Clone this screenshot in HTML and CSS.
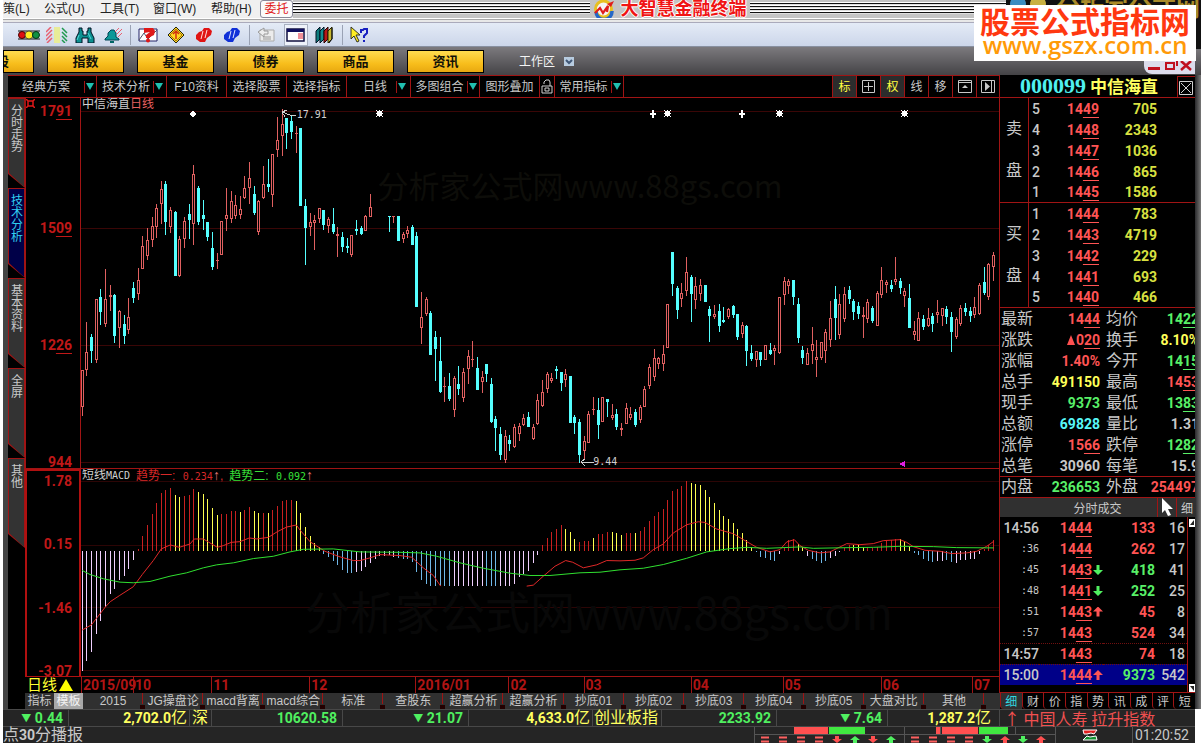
FILE: index.html
```html
<!DOCTYPE html>
<html lang="zh-CN">
<head>
<meta charset="utf-8">
<title>大智慧金融终端</title>
<link rel="stylesheet" href="styles.css">
</head>
<body>
<div class="app">
  <header class="titlebar">
    <nav class="menu">
      <button class="menu-item menu-cut">策(L)</button><button class="menu-item">公式(U)</button><button class="menu-item menu-slim">工具(T)</button><button class="menu-item menu-wide">窗口(W)</button><button class="menu-item">帮助(H)</button>
      <button class="trade-btn">委托</button>
    </nav>
    <div class="stripes"></div>
    <div class="brand">
      <svg width="22" height="18" viewBox="0 0 22 18"><circle cx="10.500" cy="9" r="8" fill="#f4f4f4" stroke="#e8c020" stroke-width="3"/><path d="M3 12a8 8 0 0 0 16-1" fill="none" stroke="#2468c8" stroke-width="3.500"/><path d="M2 13l5-5 3 5 5-7-1 6" fill="none" stroke="#e01c1c" stroke-width="2.200"/><path d="M21 1l-7 3 4 3z" fill="#e01c1c"/></svg>
      <h1>大智慧金融终端</h1>
    </div>
    <div class="stripes"></div>
  </header>

  <div class="toolbar">
    <button class="tool" aria-label="行情"><svg width="22" height="16" viewBox="0 0 22 16"><path d="M0 4h22M0 12h22" stroke="#111"/><circle cx="4" cy="8" r="3.500" fill="#e01010" stroke="#400"/><circle cx="11" cy="8" r="4" fill="#ffee20" stroke="#553"/><circle cx="18" cy="8" r="3.500" fill="#109040" stroke="#031"/></svg></button>
    <button class="tool" aria-label="选股"><svg width="22" height="16" viewBox="0 0 22 16"><path d="M8 0h6v16H8z" fill="#e8ec98"/><path d="M0 5l5-5M0 9l6-6M0 13l6-6M1 16l5-5" stroke="#e86070" stroke-width="1.500"/><path d="M16 1l5 5M16 5l5 5M16 9l5 5M16 13l3 3" stroke="#209a50" stroke-width="1.500"/></svg></button>
    <button class="tool" aria-label="查找"><svg width="20" height="16" viewBox="0 0 20 16"><path d="M4 1h3v3h1v4h4V4h1V1h3v4l3 6v5h-6v-5H7v5H1v-5l3-6z" fill="#0c9090" stroke="#012"/><path d="M4 8l-2 5M13 6l3 6" stroke="#50d8d8"/></svg></button>
    <button class="tool" aria-label="预警"><svg width="20" height="16" viewBox="0 0 20 16"><path d="M2 12l3-3V6l3-3h3l2 3v4l3 2v1H2z" fill="#0c9898" stroke="#045"/><path d="M7 14h4v2H7z" fill="#066"/><path d="M12 5l4-4M14 7l5-5M15 10l4-4" stroke="#e86070"/></svg></button>
    <i class="tool-sep"></i>
    <button class="tool" aria-label="问答"><svg width="20" height="16" viewBox="0 0 20 16"><path d="M1 2h18v12H1z" fill="#fff" stroke="#226"/><path d="M1 13l5-7 4 6 9-9" fill="none" stroke="#556"/><path d="M6 1h9l2 3-1 4-4 2v1H8V8l4-3-6 1z" fill="#e01818"/><circle cx="10" cy="13.500" r="2" fill="#e01818"/></svg></button>
    <button class="tool" aria-label="提示"><svg width="18" height="18" viewBox="0 0 18 18"><path d="M9 1l8 8-8 8-8-8z" fill="#ffd820" stroke="#221"/><path d="M9 3l6 6-6 6-6-6z" fill="none" stroke="#a87810"/><path d="M9 5v8M6 8l3-3 3 3" fill="none" stroke="#d03010" stroke-width="1.500"/></svg></button>
    <button class="tool" aria-label="红色标记"><svg width="18" height="16" viewBox="0 0 18 16"><path d="M1 8l3-3 3-1 2-3h5l3 3-1 4-4 3-2 4H5l-4-3z" fill="#e01414"/><path d="M8 4L6 12M12 3l-2 8" stroke="#ffdede"/></svg></button>
    <button class="tool" aria-label="蓝色标记"><svg width="18" height="16" viewBox="0 0 18 16"><path d="M1 8l3-3 3-1 2-3h5l3 3-1 4-4 3-2 4H5l-4-3z" fill="#1030d8"/><path d="M8 4L6 12M12 3l-2 8" stroke="#dee4ff"/></svg></button>
    <i class="tool-sep"></i>
    <button class="tool" aria-label="返回"><svg width="20" height="16" viewBox="0 0 20 16"><path d="M3 3h14v11H3z" fill="#ececec" stroke="#aaa"/><path d="M1 5l6-4v3h4v3H7v3zM6 10h8M6 12h8" fill="#eee" stroke="#999"/></svg></button>
    <button class="tool tool-on" aria-label="窗口布局"><svg width="20" height="16" viewBox="0 0 20 16"><path d="M1 2h17v12H1z" fill="#fff" stroke="#101040" stroke-width="1.500"/><path d="M1 2h17v3H1z" fill="#101060"/><path d="M12 7h5M12 9h5M12 11h5" stroke="#e02030"/></svg></button>
    <button class="tool" aria-label="资料库"><svg width="20" height="18" viewBox="0 0 20 18"><path d="M1 5l4-4v12l-4 4z" fill="#0c7c7c" stroke="#012"/><path d="M5 5l4-4v12l-4 4z" fill="#109090" stroke="#012"/><path d="M9 5l4-4v12l-4 4z" fill="#b81818" stroke="#200"/><path d="M13 5l4-4v12l-4 4z" fill="#c8b830" stroke="#220"/><path d="M17 2v11l-3 4" fill="none" stroke="#111"/></svg></button>
    <i class="tool-sep"></i>
    <button class="tool" aria-label="帮助指针"><svg width="20" height="18" viewBox="0 0 20 18"><path d="M1 1l9 8H6l3 6-2 1-3-6-3 3z" fill="#ffee20" stroke="#332"/><path d="M11 7V4h2l1-1h3v4l-3 3v2" fill="none" stroke="#1820c0" stroke-width="2"/><path d="M13 14h2v2h-2z" fill="#1820c0"/></svg></button>
  </div>

  <nav class="markets">
    <button class="gold">股</button><button class="gold">指数</button><button class="gold">基金</button><button class="gold">债券</button><button class="gold">商品</button><button class="gold">资讯</button>
    <button class="workspace">工作区 <svg width="10" height="9" viewBox="0 0 10 9"><path d="M0 0h10v9H0z" fill="#b8cce0"/><path d="M2 3l3 3 3-3" fill="none" stroke="#405878" stroke-width="2"/></svg></button>
    <div class="window-ctl">
      <svg width="44" height="12" viewBox="0 0 44 12"><path d="M0 7h12v3H0z" fill="#c01020"/><path d="M18 3h8v6h-8zM22 0h7v6" fill="none" stroke="#c01020" stroke-width="2"/><path d="M33 10l10-9M33 1l10 9" stroke="#c01020" stroke-width="2.500"/></svg>
    </div>
  </nav>

  <div class="body">
    <div class="left">
      <div class="cmdbar">
        <button class="cmd c-80">经典方案<i class="dd"></i></button><button class="cmd c-70">技术分析<i class="dd"></i></button><button class="cmd c-60">F10资料</button><button class="cmd c-60">选择股票</button><button class="cmd c-60">选择指标</button><button class="cmd c-64">日线<i class="dd"></i></button><button class="cmd c-69">多图组合<i class="dd"></i></button><button class="cmd c-60">图形叠加</button><button class="cmd c-15" aria-label="锁定"><svg width="12" height="15" viewBox="0 0 12 15"><path d="M3 5V3l2-2h3l1 2v4M1 7h10v7H1zM4 9h4v3H4z" fill="none" stroke="#d0d0d0"/></svg></button><button class="cmd c-69">常用指标<i class="dd"></i></button>
        <span class="fill"></span>
        <button class="cmd sq on">标</button><button class="cmd sq" aria-label="十字"><svg width="13" height="13" viewBox="0 0 13 13"><path d="M.5.5h12v12H.5zM2 6.500h9M6.500 2v9" fill="none" stroke="#c8c8c8"/></svg></button><button class="cmd sq on">权</button><button class="cmd sq">线</button><button class="cmd sq">移</button><button class="cmd sq" aria-label="上栏"><svg width="14" height="13" viewBox="0 0 14 13"><path d="M.5.5h13v12H.5zM.5 2.500h13" fill="none" stroke="#c8c8c8"/><path d="M4 8l3-3 3 3z" fill="#c8c8c8"/></svg></button><button class="cmd sq last" aria-label="右栏"><svg width="14" height="13" viewBox="0 0 14 13"><path d="M.5.5h13v12H.5zM10.500 1v11" fill="none" stroke="#c8c8c8"/><path d="M4 2l5 4.500L4 11z" fill="#c8c8c8"/></svg></button>
      </div>
      <div class="work">
        <nav class="side">
          <button class="side-tab">分时走势</button><button class="side-tab side-on">技术分析</button><button class="side-tab">基本资料</button><button class="side-tab">全屏</button><button class="side-tab">其他</button>
        </nav>
        <div class="charts">
          <div class="axis axis-k">
            <svg class="gear" width="9" height="9" viewBox="0 0 9 9"><path d="M2 2h5v5H2zM0 0l2 2M9 0L7 2M0 9l2-2M9 9L7 7" fill="none" stroke="#e01818" stroke-width="1.500"/></svg>
            <span>17<u>91</u></span><span>15<u>09</u></span><span>12<u>26</u></span><span>9<u>44</u></span>
          </div>
          <div class="plot plot-k">
            <svg id="kline" viewBox="0 0 918 370" preserveAspectRatio="none"></svg>
            <p class="caption">中信海直<em>日线</em></p>
            <span class="mark mark-high">17.91</span><span class="mark mark-low">9.44</span>
            <span class="water water-a">分析家公式网www.88gs.com</span>
          </div>
          <div class="axis axis-m"><span>1.78</span><span>0.15</span><span>-1.46</span><span>-3.07</span></div>
          <div class="plot plot-m">
            <svg id="macd" viewBox="0 0 918 208" preserveAspectRatio="none"></svg>
            <p class="caption caption-m"><span>短线<tt>MACD</tt></span><em class="r">趋势一: <tt>0.234</tt><b>↑</b>,</em><em class="g">趋势二: <tt>0.092</tt><b>↑</b></em></p>
            <span class="water water-b">分析家公式网www.88gs.com</span>
          </div>
          <button class="period">日线<svg width="14" height="12" viewBox="0 0 14 12"><path d="M7 0l7 12H0z" fill="#ff0"/></svg></button>
          <div class="dates"><span>2015/09</span><span>10</span><span>11</span><span>12</span><span>2016/01</span><span>02</span><span>03</span><span>04</span><span>05</span><span>06</span><span>07</span></div>
        </div>
        <div class="templates">
          <button class="tp-mode">指标</button><button class="tp-mode tp-on">模板</button>
          <div class="tp-list"><button class="tp">2015</button><button class="tp">JG操盘论</button><button class="tp">macd背离</button><button class="tp">macd综合</button><button class="tp">标准</button><button class="tp">查股东</button><button class="tp">超赢分析</button><button class="tp">超赢分析</button><button class="tp">抄底01</button><button class="tp">抄底02</button><button class="tp">抄底03</button><button class="tp">抄底04</button><button class="tp">抄底05</button><button class="tp">大盘对比</button><button class="tp">其他</button></div>
        </div>
      </div>
    </div>

    <aside class="quote">
      <div class="q-head"><strong>000099</strong><b>中信海直</b><button class="q-close" aria-label="关闭"><svg width="14" height="14" viewBox="0 0 14 14"><path d="M.5.5h13v13H.5zM2 2l10 10M12 2L2 12" fill="none" stroke="#d0d0d0"/></svg></button></div>
      <table class="book">
        <tr><th rowspan="5">卖<br>盘</th><td>5</td><td>14<u>49</u></td><td>705</td></tr>
        <tr><td>4</td><td>14<u>48</u></td><td>2343</td></tr>
        <tr><td>3</td><td>14<u>47</u></td><td>1036</td></tr>
        <tr><td>2</td><td>14<u>46</u></td><td>865</td></tr>
        <tr><td>1</td><td>14<u>45</u></td><td>1586</td></tr>
      </table>
      <table class="book">
        <tr><th rowspan="5">买<br>盘</th><td>1</td><td>14<u>44</u></td><td>783</td></tr>
        <tr><td>2</td><td>14<u>43</u></td><td>4719</td></tr>
        <tr><td>3</td><td>14<u>42</u></td><td>229</td></tr>
        <tr><td>4</td><td>14<u>41</u></td><td>693</td></tr>
        <tr><td>5</td><td>14<u>40</u></td><td>466</td></tr>
      </table>
      <table class="stats">
        <tr><th>最新</th><td class="up">14<u>44</u></td><th>均价</th><td class="down">14<u>22</u></td></tr>
        <tr><th>涨跌</th><td class="up"><svg width="8" height="10" viewBox="0 0 8 10"><path d="M4 0l4 10H0z" fill="#ff5050"/></svg>0<u>20</u></td><th>换手</th><td class="yel">8.10%</td></tr>
        <tr><th>涨幅</th><td class="up">1.40%</td><th>今开</th><td class="down">14<u>15</u></td></tr>
        <tr><th>总手</th><td class="yel">491150</td><th>最高</th><td class="up">14<u>53</u></td></tr>
        <tr><th>现手</th><td class="down">9373</td><th>最低</th><td class="down">13<u>83</u></td></tr>
        <tr><th>总额</th><td class="cyan">69828</td><th>量比</th><td>1.31</td></tr>
        <tr><th>涨停</th><td class="up">15<u>66</u></td><th>跌停</th><td class="down">12<u>82</u></td></tr>
        <tr><th>总笔</th><td>30960</td><th>每笔</th><td>15.9</td></tr>
        <tr class="split"><th>内盘</th><td class="down">236653</td><th>外盘</th><td class="up">254497</td></tr>
      </table>
      <div class="t-head"><span>分时成交</span><i><svg width="14" height="18" viewBox="0 0 14 18"><path d="M2 0l11 11H8l3 6-3 1-3-6-3 3z" fill="#fff"/></svg></i><button>细</button></div>
      <div class="t-body">
        <table class="trades">
          <tr><th>14:56</th><td class="up">14<u>44</u></td><td class="ar"></td><td class="up">133</td><td>16</td></tr>
          <tr><th class="sec">:36</th><td class="up">14<u>44</u></td><td class="ar"></td><td class="up">262</td><td>17</td></tr>
          <tr><th class="sec">:45</th><td class="up">14<u>43</u></td><td class="ar"><i class="arw dn"></i></td><td class="down">418</td><td>41</td></tr>
          <tr><th class="sec">:48</th><td class="up">14<u>41</u></td><td class="ar"><i class="arw dn"></i></td><td class="down">252</td><td>25</td></tr>
          <tr><th class="sec">:51</th><td class="up">14<u>43</u></td><td class="ar"><i class="arw"></i></td><td class="up">45</td><td>8</td></tr>
          <tr><th class="sec">:57</th><td class="up">14<u>43</u></td><td class="ar"></td><td class="up">524</td><td>34</td></tr>
          <tr class="minute"><th>14:57</th><td class="up">14<u>43</u></td><td class="ar"></td><td class="up">74</td><td>18</td></tr>
          <tr class="minute cur"><th>15:00</th><td class="up">14<u>44</u></td><td class="ar"><i class="arw"></i></td><td class="down">9373</td><td>542</td></tr>
        </table>
        <div class="scroll"><svg width="6" height="8" viewBox="0 0 6 8"><path d="M0 0h6v8H0z" fill="#fff"/><path d="M1 6l4-5v5z" fill="#222"/></svg><svg width="6" height="8" viewBox="0 0 6 8"><path d="M0 0h6v8H0z" fill="#fff"/><path d="M1 2l4 5V2z" fill="#222"/></svg></div>
      </div>
      <nav class="q-tabs"><button class="q-on">细</button><button>财</button><button>价</button><button>指</button><button>势</button><button>讯</button><button>成</button><button>评</button><button>短</button></nav>
    </aside>
  </div>

  <footer class="foot">
    <div class="indices">
      <span class="lo"><small>▼</small> 0.44</span><span class="vol">2,702.0<i>亿</i></span><span class="vol name"><i>深</i></span><span class="lo">10620.58</span><span class="lo"><small>▼</small> 21.07</span><span class="vol">4,633.0<i>亿</i></span><span class="vol name"><i>创业板指</i></span><span class="lo">2233.92</span><span class="lo"><small>▼</small> 7.64</span><span class="vol">1,287.2<i>亿</i></span><span class="ticker">↑ 中国人寿 拉升指数</span>
    </div>
    <div class="news">
      <p class="headline">点<b>30</b>分播报</p>
      <svg class="flow" width="302" height="16" viewBox="0 0 302 16">
        <path d="M.5 0v16M0 7.500h302M40.500 0v7M150.500 0v16M186.500 0v7M261.500 0v7M301.500 0v16" fill="none" stroke="#555"/>
        <path d="M40 0h34v7H40zM182 0h4v7h-4zM188 0h36v7h-36z" fill="#ff5050"/>
        <path d="M75 0h36v7H75zM225 0h29v7h-29z" fill="#40e840"/>
        <path d="M7 10.500h8M7 14.500h8M25 10.500h8M25 14.500h8M43 10.500h8M43 14.500h8M61 10.500h8M61 14.500h8M157 10.500h8M157 14.500h8M175 10.500h8M175 14.500h8M193 10.500h8M193 14.500h8M211 10.500h8M211 14.500h8" stroke="#ff6060" stroke-width="2"/>
        <path d="M81 9h4v3h3l-5 4-5-4h3zM117 9h4v3h3l-5 4-5-4h3z" fill="#ff5050"/>
        <path d="M99 16h4v-3h3l-5-4-5 4h3zM135 16h4v-3h3l-5-4-5 4h3z" fill="#50f060"/>
        <path d="M231 9h4v3h3l-5 4-5-4h3zM267 9h4v3h3l-5 4-5-4h3z" fill="#50f060"/>
        <path d="M249 16h4v-3h3l-5-4-5 4h3zM285 16h4v-3h3l-5-4-5 4h3z" fill="#ff5050"/>
      </svg>
      <svg class="net" width="16" height="12" viewBox="0 0 16 12"><path d="M1 1h14l-3 4-3-1-4 1H2z" fill="#e02020" stroke="#fff"/><path d="M15 11H1l4-4 3 1 6-1z" fill="#109030" stroke="#fff"/></svg>
      <time class="clock">01:20:52</time>
    </div>
  </footer>

  <div class="ad-back"><svg width="50" height="10" viewBox="0 0 50 10"><circle cx="12" cy="4" r="8" fill="#3a8cc0"/><circle cx="32" cy="4" r="8" fill="#c8b040"/></svg><span>分析家公式网</span></div>
  <a class="ad" href="#ad"><b>股票公式指标网</b><span>www.gszx.com.cn</span></a>
</div>
<script src="script.js"></script>
</body>
</html>
```

FILE: styles.css
```css
* { box-sizing: border-box; margin: 0; padding: 0; }
html, body { height: 100%; }
body { background: #fff; overflow: hidden; font: 12px/16px "Liberation Sans", "Noto Sans CJK SC", sans-serif; color: #c8c8c8; }
button { background: none; border: 0; color: inherit; font: inherit; white-space: nowrap; }
svg { display: block; }
i, em { font-style: normal; }
u { text-decoration: underline; text-decoration-thickness: 1px; text-underline-offset: 3px; }
table { border-collapse: collapse; width: 100%; }
th { font-weight: 400; }
tt { font-family: "DejaVu Sans Mono", monospace; font-size: 10px; }

.app { position: relative; height: 100vh; display: flex; flex-direction: column; padding-left: 3px; overflow: hidden; }

/* title row */
.titlebar { display: flex; height: 23px; flex: none; background: linear-gradient(#c4c4c4 0 18px, #fff 18px 19px, #a8a8a8 19px 20px, #e8e8e8 20px 22px, #aab 22px); }
.menu { display: flex; height: 18px; background: #f0f0f0; color: #222; }
.menu-item { width: 56px; text-align: left; }
.menu-cut { width: 41px; }
.menu-slim { width: 53px; }
.menu-wide { width: 58px; }
.trade-btn { width: 33px; margin-left: -7px; height: 18px; background: #fbfbfb; border: 1px solid #8a8a9a; border-radius: 3px; color: #e01818; }
.stripes { flex: 297; height: 12px; margin-top: 2px; background: repeating-linear-gradient(#fff 0 1px, #111 1px 2px, #ddd 2px 3px); }
.stripes:last-child { flex: 452; }
.brand { display: flex; gap: 6px; align-items: center; height: 18px; padding: 0 3px; color: #f01414; }
.brand h1 { font-size: 18px; line-height: 18px; text-shadow: 1px 0 #fff, -1px 0 #fff, 0 1px #fff, 0 -1px #fff; }

/* icon toolbar */
.toolbar { display: flex; align-items: center; height: 24px; flex: none; padding-left: 15px; gap: 6px; background: linear-gradient(#e4ebf6, #ccd6ea); border-bottom: 1px solid #8890a0; }
.tool { display: flex; align-items: center; justify-content: center; height: 22px; min-width: 22px; }
.tool-on { min-width: 24px; background: #eef2fa; border: 1px solid #a8b0c0; }
.tool-sep { width: 1px; height: 20px; background: #9aa2b4; }

/* market buttons */
.markets { display: flex; align-items: flex-start; height: 28px; flex: none; padding-top: 3px; gap: 13px; background: linear-gradient(#7c7a7e, #444346); }
.gold { width: 77px; height: 23px; flex: none; background: linear-gradient(#ffdc50, #f8be1c 60%, #e8a810); border: 1px solid #000; color: #101008; font-weight: 700; font-size: 13px; line-height: 20px; }
.gold:first-child { width: 31px; text-align: left; overflow: hidden; text-indent: -8px; }
.workspace { display: flex; align-items: center; gap: 9px; height: 23px; margin-left: 22px; color: #f4f4f4; }
.window-ctl { margin: 9px 6px 0 auto; height: 15px; width: 51px; padding: 1px 4px; background: #dcdcec; border-radius: 0 0 0 8px; }

/* centre area */
.body { display: flex; flex: 1; min-height: 0; background: linear-gradient(90deg, #444 0 5px, #000 5px calc(100% - 6px), #2a2a2c calc(100% - 6px), #777 100%); padding: 0 6px 0 5px; }
.left { flex: 1; min-width: 0; display: flex; flex-direction: column; }
.cmdbar { display: flex; height: 23px; flex: none; border: solid #a01414; border-width: 1px 0; }
.cmd { display: flex; align-items: center; justify-content: center; border-right: 1px solid #a01414; color: #c8c8c8; font-size: 12px; height: 21px; flex: none; }
.c-80 { width: 89px; padding-left: 12px; gap: 14px; }
.c-70 { width: 70px; }
.c-60 { width: 60px; }
.c-64 { width: 64px; padding-left: 12px; gap: 9px; }
.c-69 { width: 69px; }
.c-70, .c-69 { gap: 3px; padding-left: 2px; }
.c-15 { width: 15px; }
.dd { width: 10px; height: 12px; border-left: 1px solid #a01414; display: flex; align-items: center; justify-content: flex-end; }
.dd::after { content: ""; border: 4px solid transparent; border-top: 7px solid #20c0b0; border-bottom: 0; flex: none; }
.fill { flex: 1; border-right: 1px solid #a01414; }
.sq { width: 24px; }
.last { width: 23px; }
.on { background: #2c2c2c; color: #ffff40; }

.work { flex: 1; min-height: 0; display: grid; grid-template: minmax(0, 1fr) 16px / 17px minmax(0, 1fr); }
.side { grid-row: 1 / 3; display: flex; flex-direction: column; }
.side-tab { position: relative; display: flex; align-items: flex-start; width: 17px; height: 90px; padding: 7px 2px 0 3px; text-align: left; font-size: 12px; line-height: 12px; white-space: normal; word-break: break-all; background: #a01414; clip-path: polygon(0 0, 100% 0, 100% 100%, 0 calc(100% - 14px)); isolation: isolate; }
.side-tab::before { content: ""; position: absolute; inset: 1px; z-index: -1; background: #333; clip-path: polygon(0 0, 100% 0, 100% 100%, 0 calc(100% - 14px)); }
.side-on { color: #30d0f0; }
.side-on::before { background: #000048; }

.charts { display: grid; grid-template: minmax(0, 371fr) minmax(0, 208fr) 16px / 56px minmax(0, 1fr); border-right: 1px solid #a01414; }
.axis { position: relative; display: flex; flex-direction: column; justify-content: space-between; align-items: flex-end; padding-right: 8px; color: #c01818; font: 700 14px/16px Roboto, sans-serif; border-right: 1px solid #a01414; border-left: 1px solid #a01414; overflow: hidden; }
.axis-k { padding-top: 5px; border-bottom: 1px solid #a01414; }
.axis-k span:last-child { margin-bottom: -2px; }
.axis-m { padding-top: 2px; border: 2px solid #b01010; border-bottom-width: 1px; padding-right: 7px; }
.axis-m span:last-child { margin-bottom: -3px; }
.gear { position: absolute; left: 0; top: 1px; }
.plot { position: relative; overflow: hidden; border-bottom: 1px solid #a01414; }
.plot > svg { width: 100%; height: 100%; shape-rendering: crispEdges; }
.caption { position: absolute; left: 1px; top: 0; line-height: 13px; color: #d0d0d0; white-space: nowrap; }
.caption em { color: #e86060; }
.caption-m { display: flex; gap: 6px; }
.caption .r { color: #d82828; }
.caption .g { color: #38e038; }
.caption em tt { margin-left: 4px; }
.caption b { color: #e87878; font-weight: 400; font-size: 14px; }
.mark { position: absolute; color: #d0d0d0; font: 10px/12px "DejaVu Sans Mono", monospace; }
.mark-high { left: 23.500%; top: 3%; }
.mark-low { left: 55.800%; bottom: 0; }
.water { position: absolute; color: #0d0d09; font: 31px/34px "Noto Sans CJK SC", sans-serif; white-space: nowrap; }
.water-a { left: 32.300%; top: 19%; }
.water-b { left: 24.400%; top: 54%; font-size: 45px; line-height: 60px; color: #080808; }
.period { display: flex; align-items: center; gap: 2px; padding-left: 2px; font-size: 15px; line-height: 16px; height: 16px; color: #ffff30; }
.dates { display: grid; grid-template-columns: 52fr 78fr 98fr 106fr 93fr 75fr 107fr 92fr 98fr 91fr 27fr; color: #b01414; font: 700 14px/16px Roboto, sans-serif; }
.dates span { border-left: 1px solid #a01414; padding-left: 1px; white-space: nowrap; min-width: 0; }

.templates { display: flex; background: #303030; }
.tp-mode { width: 29px; }
.tp-on { background: #a8a8a8; color: #f4f4f4; }
.tp-list { flex: 1; display: flex; padding-right: 16px; }
.tp { flex: 1; position: relative; font-size: 12px; line-height: 16px; min-width: 0; }
.tp::after { content: ""; position: absolute; right: -2px; bottom: 0; width: 5px; height: 16px; background: linear-gradient(#a01414 0 0) 2px 0 / 1px 11px no-repeat, linear-gradient(#200 0 0) 0 12px / 5px 4px no-repeat; }

/* quote panel */
.quote { width: 195px; flex: none; overflow: hidden; display: flex; flex-direction: column; font: 700 14px/20px Roboto, "Noto Sans CJK SC", sans-serif; }
.q-head { display: flex; align-items: center; height: 23px; flex: none; border-bottom: 1px solid #a01414; padding-left: 20px; }
.q-head strong { font: 700 22px/22px "Liberation Serif", serif; color: #50f0f0; width: 70px; }
.q-head b { font: 700 17px/22px "Noto Sans CJK SC", sans-serif; color: #ffff60; }
.q-close { margin-left: auto; width: 18px; height: 21px; border: solid #a01414; border-width: 1px 0 0 1px; padding: 3px 0 0 1px; }
.book { border-collapse: separate; border-spacing: 0; flex: none; }
.book tr, .stats tr, .trades tr { height: 21px; }
.book tr:last-child td, .book th { border-bottom: 1px solid #a01414; }
.book th { width: 29px; border-right: 1px solid #a01414; font-size: 16px; line-height: 42px; vertical-align: middle; }
.book td { text-align: right; color: #d8e040; }
.book td:nth-last-child(3) { width: 15px; text-align: left; padding-left: 3px; color: #c8c8c8; font-weight: 500; }
.book td:nth-last-child(2) { width: 55px; color: #ff5454; }
.book td:last-child { padding-right: 38px; }
.stats { width: 199px; flex: none; table-layout: fixed; border-collapse: separate; border-spacing: 0; }
.stats th { width: 33px; font-size: 16px; text-align: left; white-space: nowrap; padding-left: 1px; }
.stats td { text-align: right; white-space: nowrap; }
.stats th:nth-child(3) { width: 38px; padding-left: 6px; }
.stats td:nth-child(2) { width: 67px; }
.stats td svg { display: inline-block; margin-right: 1px; }
.stats .split th, .stats .split td { border-top: 1px solid #a01414; }
.up { color: #ff5454; }
.down { color: #58f068; }
.yel { color: #ffff58; }
.cyan { color: #58f8f8; }
.t-head { display: flex; height: 20px; flex: none; background: #303030; border-top: 1px solid #a01414; font: 12px/19px "Noto Sans CJK SC", sans-serif; text-align: center; }
.t-head span { flex: 1; padding-left: 38px; }
.t-head i, .t-head button { width: 19px; border-left: 1px solid #a01414; padding-left: 2px; }
.t-body { display: flex; flex: 1; min-height: 0; border-bottom: 1px solid #a01414; }
.trades { align-self: flex-start; flex: 1; border-collapse: separate; border-spacing: 0; }
.trades th { width: 39px; font-weight: 500; text-align: right; }
.trades .sec { font: 10px/20px "DejaVu Sans Mono", monospace; }
.trades td { text-align: right; }
.trades td:nth-child(2) { width: 53px; }
.trades .ar { width: 11px; padding-left: 1px; }
.trades td:nth-child(4) { width: 52px; }
.trades td:last-child { font-weight: 500; padding-right: 2px; }
.minute th, .minute td { border-top: 1px dotted #701010; }
.cur { background: #000088; }
.arw { display: block; width: 10px; height: 10px; background: #ff5454; clip-path: polygon(50% 0, 100% 50%, 65% 50%, 65% 100%, 35% 100%, 35% 50%, 0 50%); }
.dn { background: #50f060; transform: rotate(180deg); }
.scroll { width: 8px; flex: none; border-left: 1px solid #a01414; padding: 2px 0 0 1px; display: flex; flex-direction: column; justify-content: space-between; }
.q-tabs { display: flex; height: 16px; flex: none; font: 12px/16px "Noto Sans CJK SC", sans-serif; }
.q-tabs button { flex: 1; border-left: 1px solid #a01414; border-radius: 0 0 0 4px; }
.q-tabs .q-on { background: #303030; color: #30d8e0; }

/* status rows */
.foot { flex: none; background: #252525; margin-right: 6px; }
.indices { display: grid; grid-template-columns: 66fr 121fr 22fr 131fr 126fr 124fr 69fr 115fr 111fr 112fr 195fr; height: 18px; border: solid #484848; border-width: 1px 0; font: 700 14px/16px Roboto, "Noto Sans CJK SC", sans-serif; }
.indices span { text-align: right; border-right: 1px solid #484848; padding-right: 5px; white-space: nowrap; min-width: 0; }
.indices small { font-size: 10px; vertical-align: 1px; line-height: 10px; }
.indices i { font-weight: 400; font-size: 16px; }
.indices .vol { color: #ffff60; padding-right: 2px; }
.indices .vol:nth-child(10) { padding-right: 8px; }
.indices .name { padding-right: 3px; }
.lo { color: #50f060; }
.indices .ticker { text-align: left; padding-left: 4px; color: #f05050; border: 0; font: 16px/16px "Noto Sans CJK SC", sans-serif; }
.news { display: flex; align-items: center; height: 16px; font: 14px/16px Roboto, "Noto Sans CJK SC", sans-serif; }
.headline { flex: 1; font-size: 16px; }
.headline b { font-size: 14px; }
.net { margin: 0 34px 0 26px; }
.clock { width: 63px; padding-left: 2px; border-left: 1px solid #555; }

/* overlay banner */
.ad-back { position: absolute; right: 0; top: 0; width: 195px; height: 49px; background: #111; overflow: hidden; display: flex; }
.ad-back span { font: 700 24px/28px "Noto Sans CJK SC", sans-serif; color: #a88a28; margin-top: -8px; white-space: nowrap; }
.ad { position: absolute; right: 5px; top: 5px; width: 222px; height: 56px; background: #fff; text-align: center; text-decoration: none; overflow: hidden; }
.ad b, .ad span { display: block; white-space: nowrap; }
.ad b { font: 700 30px/30px "Noto Sans CJK SC", sans-serif; color: #ff3810; }
.ad span { font: 600 24px/20px "Open Sans", sans-serif; color: #ff9a08; }
```

FILE: script.js
```js
// Prices are in thirds of a pixel from the top of the panel: kind, high, body top, body bottom, low.
const candles = `r826 826 937 962|r682 772 826 842|c716 726 767 803|r613 613 794 803|c583 606 650 689|r522 613 686 695|r570 601 607 647|c598 600 722 743|r646 649 700 758|c660 687 722 746
r610 667 706 718|c561 579 609 624|r519 556 598 616|r423 454 523 523|r400 436 484 494|r367 394 436 455|r327 340 397 430|r258 283 328 386|c258 267 381 419|r337 346 397 413
c348 351 542 543|r424 433 542 546|r366 379 433 458|c327 357 375 431|r211 238 388 449|c274 279 381 391|c315 360 372 405|c381 381 426 437|c411 459 516 524|r474 495 497 521
r379 379 481 481|r279 361 373 407|r288 319 373 383|r300 331 364 371|r304 343 361 371|r243 280 310 311|r201 250 280 326|c273 297 354 361|r316 319 412 419|r214 268 310 311
c192 267 276 291|r178 178 301 335|r67 136 166 185|r43 88 124 182|c69 69 114 161|c60 78 111 131|r94 115 118 173|c99 99 332 332|c312 333 399 510|r354 382 397 422
r361 376 385 464|r340 340 373 383|c345 345 389 406|r367 373 394 415|c340 387 411 417|r397 418 422 485|c411 426 456 471|c430 453 459 474|r421 421 479 485|c375 402 407 420
c394 399 416 419|r361 364 409 409|r297 336 367 367||||c363 363 365 410|r363 364 366 384|c363 363 437 437|r412 418 433 443
r394 405 418 430|c390 396 449 449|c411 423 635 635|r591 667 700 746|r606 613 656 664|c648 654 779 779|c708 726 762 857|c727 798 890 893|r846 873 875 920|c834 873 912 917
r843 849 944 965|c813 867 881 899|r820 832 908 920|r765 784 821 866|r739 792 794 816|c786 819 884 884|r829 846 860 895|c807 807 836 860|c850 867 980 983|c963 972 998 1067
c997 1018 1080 1095|r1006 1022 1094 1103|c1019 1035 1046 1067|r987 997 1057 1058|r984 993 1018 1037|r957 970 991 992|c951 966 995 995|r987 996 1033 1036|r897 916 988 989|r855 892 932 935
r832 838 883 893|r834 850 857 863|c813 822 828 851|c831 831 863 887|r823 838 856 875|c843 843 983 983|c960 966 983 1016|c972 981 1080 1103|r1024 1039 1067 1091|r949 958 1043 1043
r907 942 946 961|c909 945 989 1031|r907 907 980 980|c912 912 920 965|r927 961 968 974|c942 957 996 1004|r985 999 1006 1024|r925 940 986 988|r936 957 968 974|c942 951 989 995
r931 936 974 983|r873 882 935 935|r808 817 872 881|r763 790 845 857|r786 790 806 821|r751 778 806 829|r628 628 758 758|c471 471 567 602|c573 579 645 671|r564 595 611 635
r487 532 587 602|c540 546 597 680|r547 574 614 641|r552 571 596 617|c570 570 620 620|c633 642 662 740|r630 658 665 671|c627 648 692 710|c636 675 681 684|r640 643 665 671
c630 633 660 668|c657 657 726 735|r682 691 716 728|c690 693 768 812|c751 774 792 797|r768 769 794 815|c771 771 795 812|r751 751 794 794|c744 765 776 779|r751 760 767 809
r606 607 773 778|r547 559 599 629|r552 559 572 596|c555 555 605 629|c609 627 728 743|c753 765 789 806|r759 775 809 809|r697 747 767 806|r736 787 794 845|r741 742 788 795
r703 711 767 803|r618 670 734 755|c573 612 669 735|r598 628 719 731|r577 598 671 680|c573 585 611 626|c612 618 650 674|c621 633 656 671|r637 661 665 728|r613 622 671 683
c633 639 678 683|r589 595 692 692|r517 556 599 608|r556 562 571 593|c555 570 582 591|r487 552 560 569|c549 558 579 597|r579 589 602 635|c567 609 698 698|r679 709 719 734
r651 670 737 737|c660 672 695 704|r640 670 692 695|c655 663 687 711|r615 652 659 684|r640 640 662 692|c633 642 665 686|c651 666 710 770|r666 673 725 731|r631 640 686 692
c624 639 650 662|c636 648 662 680|r607 637 661 668|r564 571 658 659|c516 561 594 600|r504 508 605 614|r471 481 517 559`.replace(/\n/g, '|').split('|');

// Histogram ends: l lavender, b blue, r red, y yellow.
const bars = `l635 l607 l578 l524 l486 l443 l404 l389 l362 l350 l328 l300 r267 r228 r196 r163 r129 r100 r90 r84 y106 y111 r108 r105 r88 y96 y102 y118 y145 y165 r163 r162 r153 r153 y157 r150 r142 y153 y159 r159 y160 r150 r138 r123 r120 r120 y124 y160 y202 y229 y250 y262 b282 b292 b303 b315 b329 b338 b338 l336 l333 l322 l310 l298 l289 l287 l285 l290 b293 b296 b296 b305 b335 b362 b375 b380 b380 b380 b380 b380 l380 l380 l380 l380 l380 l380 l380 b380 b380 b380 l380 l380 l380 l374 l355 l345 l332 l308 l284 r255 r234 r216 r208 r195 y207 y216 y237 r246 r243 r242 y234 r222 r222 r216 y216 y219 y225 r219 r218 y220 r213 r201 r184 r168 r157 r147 r120 r93 r87 r78 r64 y69 y72 y76 y90 y111 y129 y150 y168 y177 y190 y208 y220 y240 y262 b275 b290 b293 b300 b303 l282 r264 r240 r237 y252 y262 l288 b297 b304 b308 b302 l293 l289 l277 r264 r255 y255 y255 y262 r262 r263 r262 r249 r240 r240 r238 y237 y243 y258 b278 b285 b298 b303 b306 l303 l303 b299 b306 l308 l300 l300 l297 l296 l283 r268 r255 r240`.split(' ');

const fast = ['247,512 274,497 289,478 316,443 331,427 358,409 400,382 427,345 460,303 484,268 511,256 526,260 538,263 570,253 583,238 610,238 625,247 652,263 670,258 694,248 720,246 748,235 770,238 805,233 832,216 860,202 889,196 901,212 931,247 975,275 1020,292 1060,303 1080,303 1110,295 1140,285 1200,288 1235,293 1270,325 1300,348 1322,380',
  '1580,380 1600,377 1630,350 1665,320 1697,303 1718,308 1750,325 1790,316 1820,303 1860,304 1905,302 1930,295 1960,270 1990,253 2020,220 2060,195 2095,186 2115,188 2150,208 2200,222 2235,243 2270,263 2310,277 2340,270 2360,247 2383,240 2400,258 2425,272 2460,280 2490,277 2520,262 2540,252 2580,255 2620,252 2650,243 2700,240 2720,248 2740,261 2775,272 2820,275 2855,282 2900,280 2930,275 2960,260 2981,245'];
const slow = ['247,333 270,345 310,358 360,368 400,370 450,366 510,350 560,340 610,325 650,316 700,310 760,297 820,290 870,277 910,269 1000,268 1080,277 1200,278 1260,280 1310,290 1380,310 1450,326 1530,341 1590,348 1650,348 1740,340 1800,338 1860,331 1930,326 1990,315 2060,296 2120,277 2190,267 2240,263 2300,266 2400,262 2440,266 2550,264 2620,263 2700,260 2800,261 2870,264 2981,265'];

const colX = i => 1 + Math.floor(4.648 * i + 0.3);
const rect = (x, y, w, h, fill, extra = '') => `<rect x="${x}" y="${y}" width="${w}" height="${h}" fill="${fill}" ${extra}/>`;

function drawCandles() {
  const y = v => Math.round(v / 3) - 3;
  let out = '';
  [13, 130, 247, 364].forEach(g => { out += rect(0, g, 918, 1, '#3a0606'); });
  candles.forEach((row, i) => {
    if (!row) return;
    const [h, t, b, l] = row.slice(1).split(' ').map(v => y(+v));
    const x = colX(i);
    if (row[0] === 'c') {
      out += rect(x, h, 1, Math.max(1, l - h), '#5ff');
      out += rect(x - 1, t, 3, Math.max(1, b - t), '#5ff');
    } else {
      out += rect(x, h, 1, Math.max(0, t - h), '#e06060') + rect(x, b, 1, Math.max(0, l - b), '#e06060');
      if (b - t < 3) out += rect(x - 1, t, 3, Math.max(1, b - t), '#e06060');
      else out += rect(x - 0.5, t + 0.5, 2, b - t - 1, 'none', 'stroke="#e06060"');
    }
  });
  [298, 586, 698, 823].forEach(x => {
    out += rect(x - 2, 13, 5, 5, '#fff') + rect(x, 12, 1, 7, '#fff') + rect(x - 3, 15, 7, 1, '#fff');
    out += `<path d="M${x - 3} 12h1v1h-1zM${x + 3} 12h1v1h-1zM${x - 3} 18h1v1h-1zM${x + 3} 18h1v1h-1z" fill="#fff"/>`;
  });
  [572, 661].forEach(x => { out += rect(x - 1, 12, 2, 8, '#fff') + rect(x - 3, 15, 6, 2, '#fff'); });
  out += '<path d="M112 12l3 4-3 4-3-4z" fill="#fff"/>';
  out += '<path d="M201 14l8 3h6M201 14l5-2M201 14l3 5M500 364h13M500 364l4-3M500 364l4 4" fill="none" stroke="#d0d0d0"/>';
  out += '<path d="M818 366l6-3v6z" fill="#e020e0"/>';
  document.getElementById('kline').innerHTML = out;
}

function drawMacd() {
  const y = v => Math.round((v - 27) / 3);
  const tone = { l: '#f0d0ff', b: '#70b8e8', r: '#c82020', y: '#ffff50' };
  const line = (pts, color) => `<polyline points="${pts.split(' ').map(p => {
    const [a, b] = p.split(',');
    return `${((a - 243) / 3).toFixed(1)},${((b - 27) / 3).toFixed(1)}`;
  }).join(' ')}" fill="none" stroke="${color}"/>`;
  let out = '';
  [12, 76, 139, 202].forEach(g => { out += rect(0, g, 918, 1, '#2c0505'); });
  bars.forEach((b, i) => {
    const end = y(+b.slice(1));
    out += rect(colX(i), Math.min(82, end), 1, Math.abs(82 - end), tone[b[0]]);
  });
  fast.forEach(s => { out += line(s, '#e02828'); });
  slow.forEach(s => { out += line(s, '#30e030'); });
  document.getElementById('macd').innerHTML = out;
}

drawCandles();
drawMacd();
```
